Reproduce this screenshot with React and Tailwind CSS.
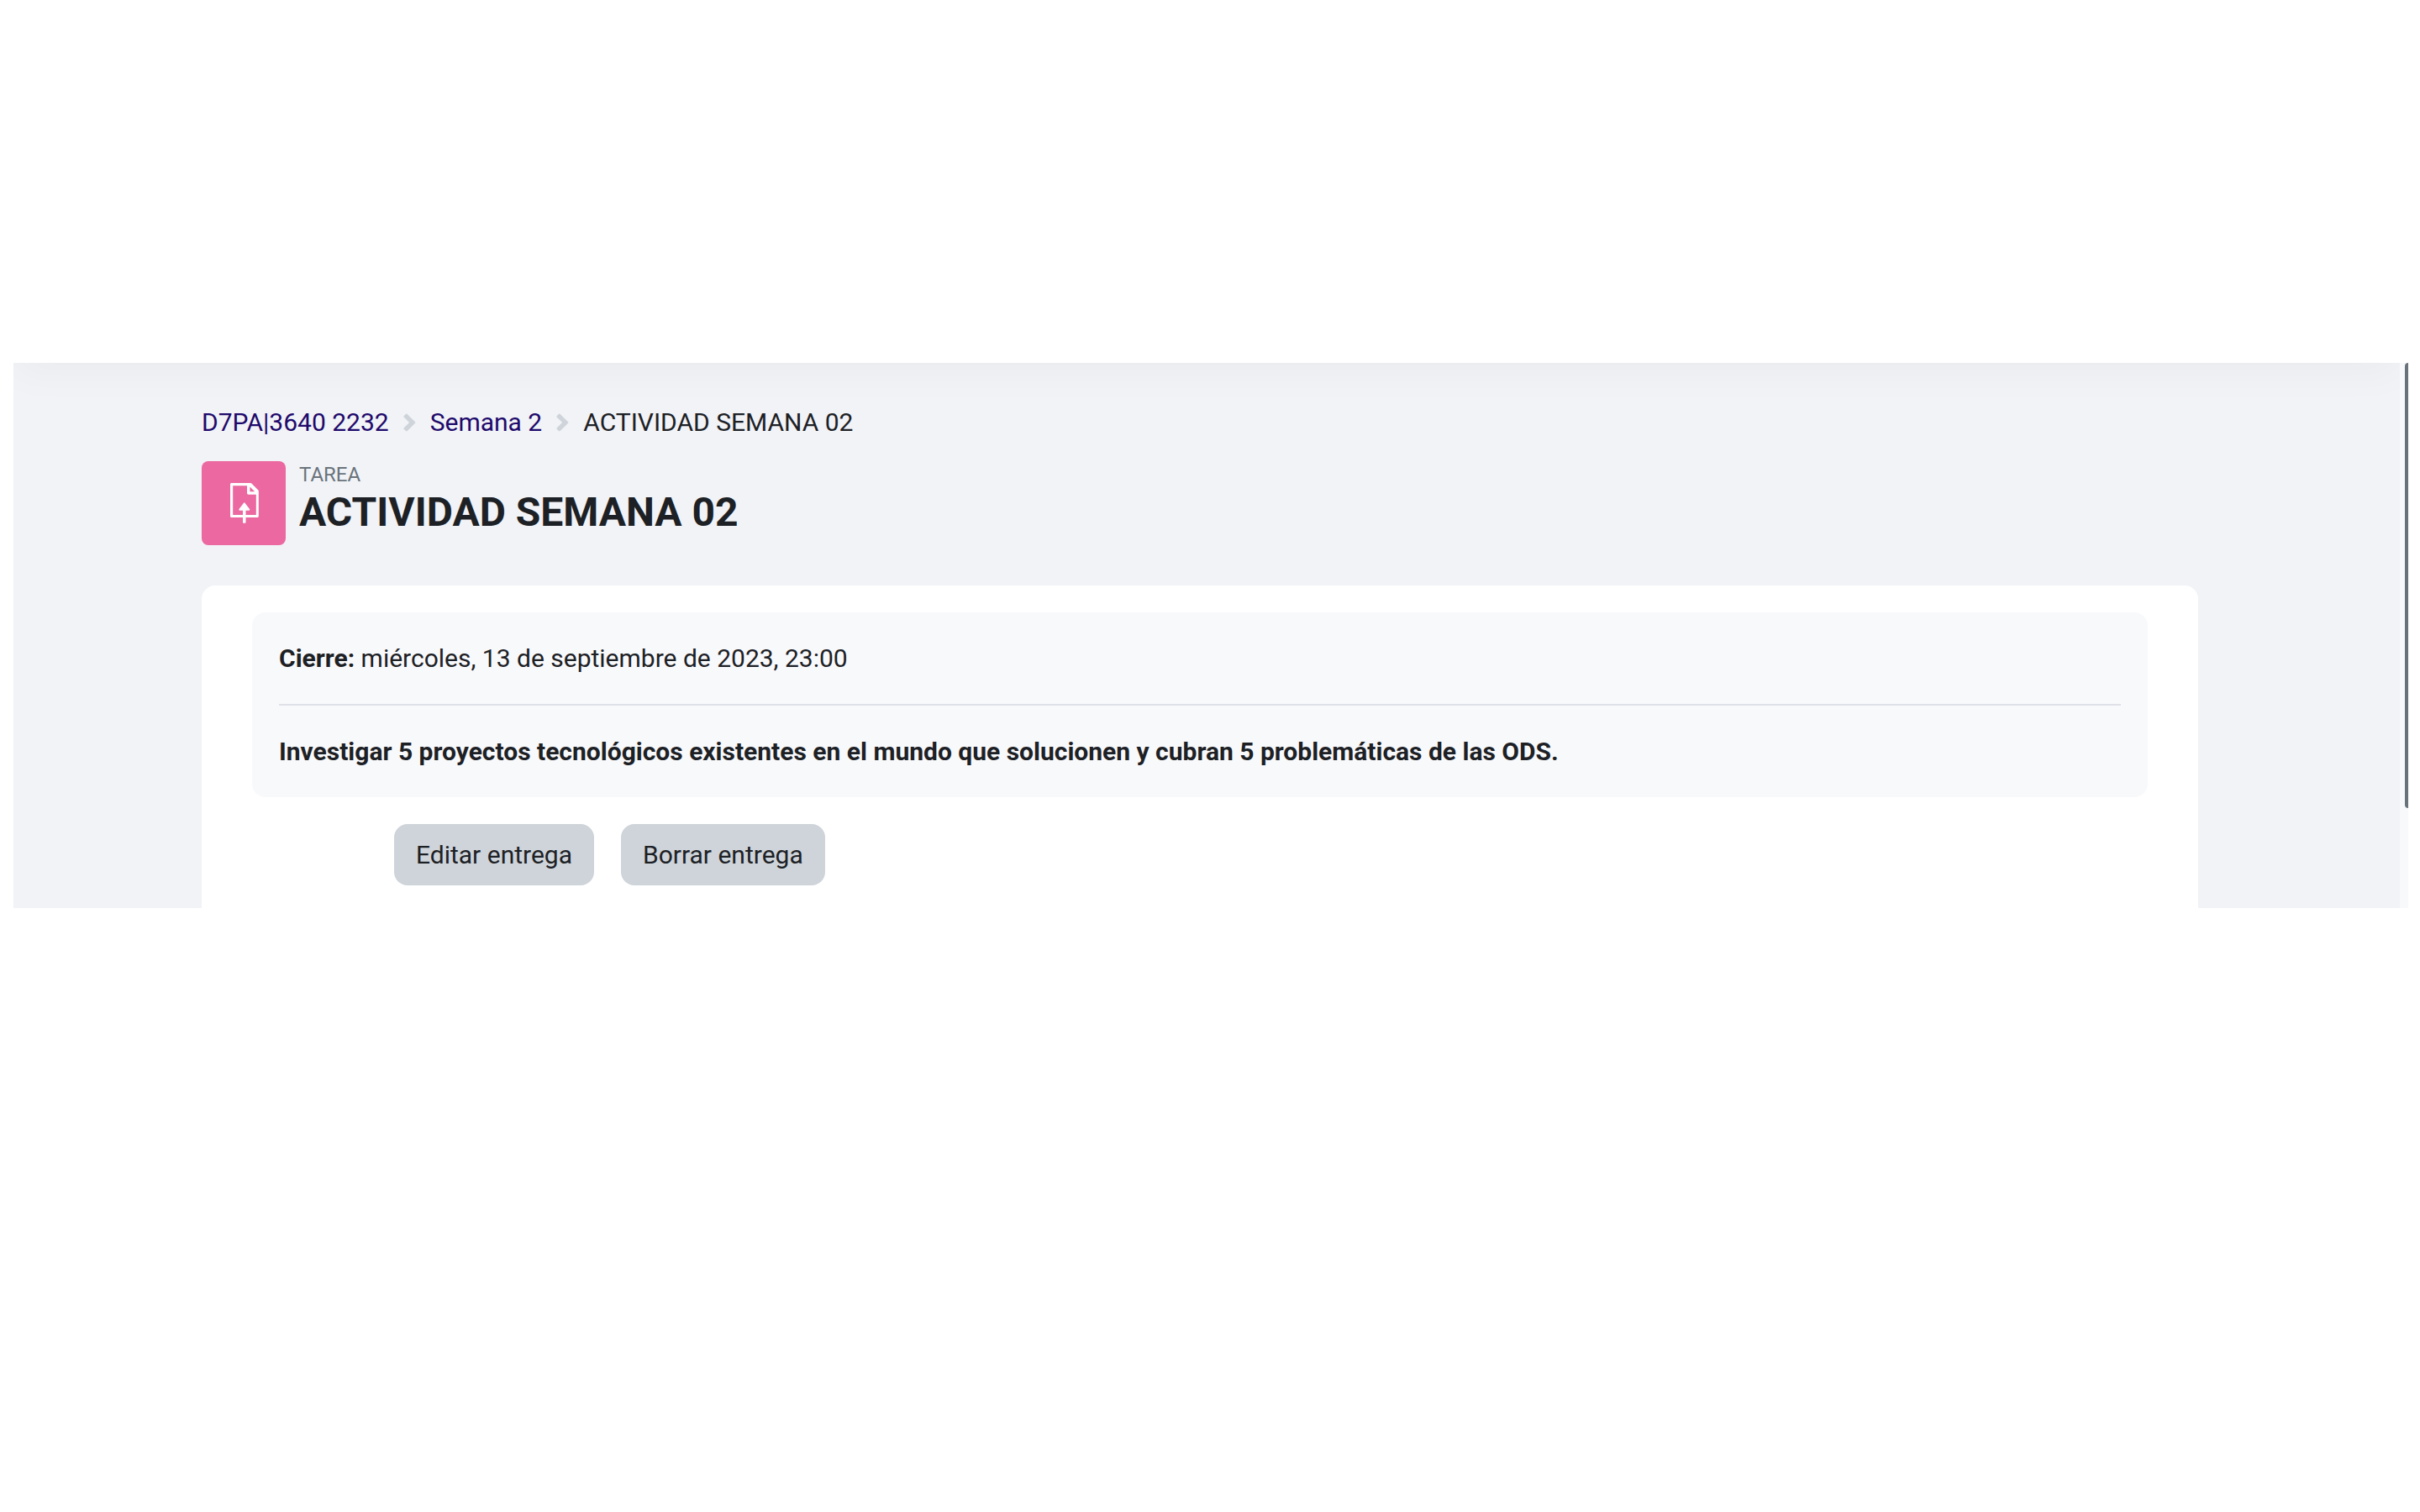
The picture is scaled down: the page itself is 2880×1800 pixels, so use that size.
const crumbs = [
  { label: "D7PA|3640 2232", href: "#curso" },
  { label: "Semana 2", href: "#semana-2" },
];

function Chevron() {
  return (
    <svg className="h-[22px] w-[17px] shrink-0" viewBox="0 0 17 22" aria-hidden="true">
      <path
        fill="#ced4da"
        d="M1.800 3.100 4 .9c.5-.5 1.100-.5 1.600 0L15 10.200c.5.5.5 1.100 0 1.600L5.600 21.100c-.5.5-1.100.5-1.600 0L1.800 18.900c-.5-.5-.5-1.100 0-1.600L8.100 11 1.800 4.700c-.5-.5-.5-1.100 0-1.600Z"
      />
    </svg>
  );
}

function AssignIcon() {
  return (
    <svg className="size-12" viewBox="0 0 48 48" aria-hidden="true">
      <path
        fill="#fff"
        fillRule="evenodd"
        d="M9.500 0H32c.6 0 1 .2 1.400.6l7.900 7.900c.3.3.5.7.5 1.200V39.500c0 .9-.6 1.500-1.500 1.500H9.500C8.600 41 8 40.400 8 39.500v-38C8 .600 8.600 0 9.500 0ZM11.200 3.200V38H38.800V13.700H29.700c-1 0-1.700-.7-1.700-1.700V3.200ZM31.400 4.500v5.800h5.800Z"
      />
      <path fill="#fff" d="M24 23.700c.4-.5 1-.5 1.400 0l5.700 7.400c.5.7.1 1.600-.8 1.600h-3.800V46.800c0 .6-.4 1-1 1H24c-.6 0-1-.4-1-1V32.700h-3.700c-.9 0-1.300-.9-.8-1.600Z" />
    </svg>
  );
}

function ActionButton({ children }) {
  return (
    <button type="button" className="rounded-2xl bg-[#ced4da] px-[26px] py-[14px]">
      {children}
    </button>
  );
}

export default function App() {
  return (
    <div className="min-h-screen bg-white pt-[432px] pr-[14px] pl-4 font-['Roboto',sans-serif] text-[30px] leading-[45px] text-[#1d2125]">
      <div className="flex overflow-hidden bg-[#f1f3f7]">
        <div className="min-w-0 grow">
          <div className="-mt-[120px] h-[120px] shadow-[0_12px_48px_rgba(0,0,0,0.035)]" />
          <main className="pt-12 pr-[240px] pl-56">
            <nav aria-label="Ruta de navegación">
              <ol className="flex items-center">
                {crumbs.map((crumb) => (
                  <li key={crumb.label} className="flex items-center">
                    <a href={crumb.href} className="text-[#1f0a6b]">
                      {crumb.label}
                    </a>
                    <span className="px-4">
                      <Chevron />
                    </span>
                  </li>
                ))}
                <li aria-current="page">ACTIVIDAD SEMANA 02</li>
              </ol>
            </nav>

            <header className="mt-6 flex items-start gap-4">
              <div className="flex size-[100px] shrink-0 items-center justify-center rounded-lg bg-[#eb68a0]">
                <AssignIcon />
              </div>
              <div>
                <div className="text-2xl leading-8 text-[#6a737b]">TAREA</div>
                <h1 className="text-5xl leading-[58px] font-bold">ACTIVIDAD SEMANA 02</h1>
              </div>
            </header>

            <section className="mt-12 rounded-t-2xl bg-white px-[60px] pt-8 pb-[27px]">
              <div className="rounded-2xl bg-[#f8f9fb] p-8">
                <p>
                  <strong>Cierre:</strong> miércoles, 13 de septiembre de 2023, 23:00
                </p>
                <hr className="my-8 border-t-2 border-[#dfe1e8]" />
                <p className="font-bold">
                  Investigar 5 proyectos tecnológicos existentes en el mundo que solucionen y cubran 5 problemáticas de las ODS.
                </p>
              </div>
              <div className="mt-8 flex gap-8 pl-[169px]">
                <ActionButton>Editar entrega</ActionButton>
                <ActionButton>Borrar entrega</ActionButton>
              </div>
            </section>
          </main>
        </div>
        <div className="flex w-[10px] shrink-0 flex-col items-end bg-[#f8f9fb]">
          <div className="h-[530px] w-1 rounded-l-full bg-[#6a737b]" />
        </div>
      </div>
    </div>
  );
}
